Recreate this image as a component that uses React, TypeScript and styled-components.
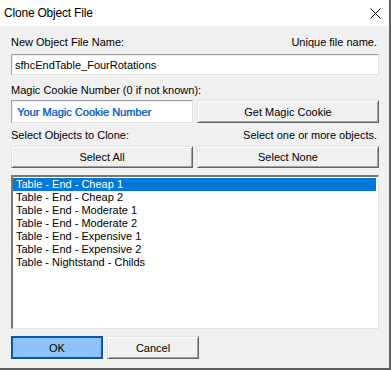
import React, { FC } from 'react';
import styled, { createGlobalStyle } from 'styled-components';

const GlobalStyle = createGlobalStyle`
  html, body {
    margin: 0;
    padding: 0;
    background: #f0f0f0;
  }
  * {
    box-sizing: border-box;
  }
`;

const items = [
  'Table - End - Cheap 1',
  'Table - End - Cheap 2',
  'Table - End - Moderate 1',
  'Table - End - Moderate 2',
  'Table - End - Expensive 1',
  'Table - End - Expensive 2',
  'Table - Nightstand - Childs',
];

const Dialog = styled.div`
  width: 391px;
  height: 370px;
  background: #f0f0f0;
  border-right: 2px solid #5f5f5f;
  border-bottom: 2px solid #5f5f5f;
  display: flex;
  flex-direction: column;
  font-family: 'Liberation Sans', Arial, sans-serif;
  font-size: 11px;
  color: #000;
`;

const TitleBar = styled.div`
  height: 26px;
  flex: none;
  background: #fff;
  display: flex;
  align-items: center;
  justify-content: space-between;
  padding: 0 8px 0 4px;
  font-family: 'Segoe UI', 'Liberation Sans', sans-serif;
  font-size: 12px;
  letter-spacing: -0.2px;
`;

const Body = styled.div`
  flex: 1;
  display: flex;
  flex-direction: column;
  padding: 0 10px 0 11px;
`;

const LabelRow = styled.div<{ $top: number }>`
  height: 13px;
  margin-top: ${(p) => p.$top}px;
  display: flex;
  justify-content: space-between;
  align-items: center;
  padding-right: 2px;
  line-height: 13px;
`;

const TextBox = styled.div<{ $accent?: boolean }>`
  height: ${(p) => (p.$accent ? 23 : 21)}px;
  margin-top: ${(p) => (p.$accent ? 0 : 5)}px;
  background: #fff;
  border: 1px solid;
  border-color: #a0a0a0 #e3e3e3 #e3e3e3 #a0a0a0;
  box-shadow: inset 1px 1px 0 #f0f0f0;
  display: flex;
  align-items: center;
  padding-left: ${(p) => (p.$accent ? 5 : 3)}px;
  color: ${(p) => (p.$accent ? '#1668c8' : '#000')};
  text-shadow: ${(p) => (p.$accent ? '0.4px 0 0 #1668c8' : 'none')};
`;

const Row = styled.div<{ $top: number; $height: number }>`
  display: grid;
  grid-template-columns: 1fr 1fr;
  gap: 4px;
  margin-top: ${(p) => p.$top}px;
  height: ${(p) => p.$height}px;
`;

const Button = styled.button<{ $primary?: boolean }>`
  font-family: 'Liberation Sans', Arial, sans-serif;
  font-size: 11px;
  color: #000;
  padding: 0;
  margin: 0;
  height: 100%;
  background: ${(p) => (p.$primary ? '#8cc2f6' : '#f0f0f0')};
  border: 1px solid;
  border-color: ${(p) =>
    p.$primary ? '#0b57a4' : '#e3e3e3 #646464 #646464 #e3e3e3'};
  box-shadow: ${(p) =>
    p.$primary
      ? 'inset 1px 1px 0 #0b57a4, inset -1px -1px 0 #0b57a4'
      : 'inset 1px 1px 0 #fff, inset -1px -1px 0 #a0a0a0'};
`;

const ListBox = styled.div`
  margin-top: 7px;
  height: 154px;
  background: #fff;
  border-style: solid;
  border-width: 2px 1px 1px 2px;
  border-color: #777 #e3e3e3 #e3e3e3 #777;
  padding: 1px 2px 0 0;
`;

const ListItem = styled.div<{ $selected?: boolean }>`
  height: 13px;
  line-height: 13px;
  padding-left: 3px;
  white-space: nowrap;
  background: ${(p) => (p.$selected ? '#0078d7' : 'transparent')};
  color: ${(p) => (p.$selected ? '#fff' : '#000')};
`;

const Footer = styled.div`
  display: flex;
  gap: 4px;
  margin-top: 7px;
  height: 23px;
`;

const FooterButton = styled(Button)`
  width: 92px;
`;

const CloseIcon: FC = () => (
  <svg width="11" height="11" viewBox="0 0 11 11">
    <path d="M0.5 0.5 L10.5 10.5 M10.5 0.5 L0.5 10.5" stroke="#000" strokeWidth="1" />
  </svg>
);

export default function App() {
  return (
    <>
      <GlobalStyle />
      <Dialog>
        <TitleBar>
          <span>Clone Object File</span>
          <CloseIcon />
        </TitleBar>
        <Body>
          <LabelRow $top={10}>
            <span>New Object File Name:</span>
            <span>Unique file name.</span>
          </LabelRow>
          <TextBox>sfhcEndTable_FourRotations</TextBox>
          <LabelRow $top={9}>
            <span>Magic Cookie Number (0 if not known):</span>
          </LabelRow>
          <Row $top={3} $height={23}>
            <TextBox $accent>Your Magic Cookie Number</TextBox>
            <Button>Get Magic Cookie</Button>
          </Row>
          <LabelRow $top={6}>
            <span>Select Objects to Clone:</span>
            <span>Select one or more objects.</span>
          </LabelRow>
          <Row $top={4} $height={22}>
            <Button>Select All</Button>
            <Button>Select None</Button>
          </Row>
          <ListBox>
            {items.map((item, i) => (
              <ListItem key={item} $selected={i === 0}>
                {item}
              </ListItem>
            ))}
          </ListBox>
          <Footer>
            <FooterButton $primary>OK</FooterButton>
            <FooterButton>Cancel</FooterButton>
          </Footer>
        </Body>
      </Dialog>
    </>
  );
}
